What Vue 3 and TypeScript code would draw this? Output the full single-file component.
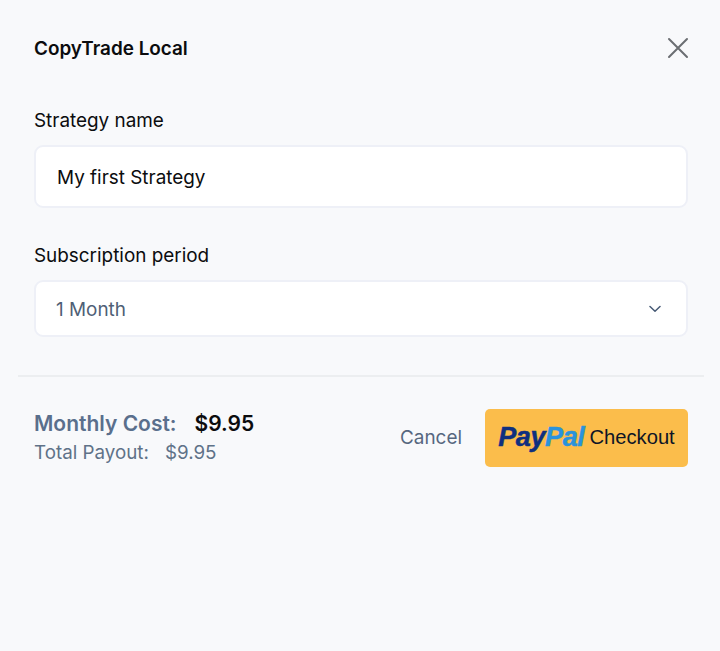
<script setup lang="ts">
const title = 'CopyTrade Local'
</script>

<template>
  <div class="page">
    <header class="head">
      <h1 class="title">{{ title }}</h1>
      <button class="close" type="button" aria-label="Close">
        <svg width="22" height="22" viewBox="0 0 22 22" fill="none">
          <path d="M2 2L20 20M20 2L2 20" stroke="#6b6e72" stroke-width="2" stroke-linecap="round" />
        </svg>
      </button>
    </header>
    <section class="form">
      <div class="field first">
        <label class="label">Strategy name</label>
        <div class="input">My first Strategy</div>
      </div>
      <div class="field second">
        <label class="label">Subscription period</label>
        <div class="select">
          <span>1 Month</span>
          <svg width="12" height="8" viewBox="0 0 12 8" fill="none">
            <path d="M1 1.5L6 6.2L11 1.5" stroke="#475a75" stroke-width="1.5" stroke-linecap="round" stroke-linejoin="round" />
          </svg>
        </div>
      </div>
    </section>
    <footer class="foot">
      <div class="costs">
        <div class="monthly"><span class="m-label">Monthly Cost:</span><span class="m-value">$9.95</span></div>
        <div class="total"><span>Total Payout:</span><span>$9.95</span></div>
      </div>
      <div class="actions">
        <button class="cancel" type="button">Cancel</button>
        <button class="paypal" type="button">
          <span class="logo"><span class="pay">Pay</span><span class="pal">Pal</span></span>
          <span class="checkout">Checkout</span>
        </button>
      </div>
    </footer>
  </div>
</template>

<style>
html, body { margin: 0; background: #f8f9fb; }
</style>

<style scoped>
.page {
  width: 720px;
  height: 651px;
  box-sizing: border-box;
  background: #f8f9fb;
  padding: 0 16px 0 18px;
  font-family: Inter, "Liberation Sans", sans-serif;
  color: #0b0c0e;
}
.head {
  display: flex;
  justify-content: space-between;
  align-items: center;
  height: 96px;
  padding: 1px 15px 0 16px;
  box-sizing: border-box;
}
.title { margin: 0; font-size: 18.9px; font-weight: 600; line-height: 24px; }
.close { border: 0; background: none; padding: 0; display: flex; margin-top: -1px; }
.form { padding: 0 16px; }
.field { display: flex; flex-direction: column; }
.second { margin-top: 35px; }
.label { font-size: 18.9px; line-height: 24px; height: 24px; margin-top: 13px; margin-bottom: 12px; }
.second .label { margin-top: 1px; margin-bottom: 12px; }
.input, .select {
  box-sizing: border-box;
  background: #fff;
  border: 2px solid #eef0f7;
  border-radius: 9px;
  display: flex;
  align-items: center;
}
.input { height: 63px; padding: 2px 21px 0; font-size: 18.9px; }
.select {
  height: 57px;
  padding: 2px 25px 0 20px;
  justify-content: space-between;
  font-size: 18.9px;
  color: #4f5f76;
}
.select svg { margin-top: -2px; }
.foot {
  margin-top: 38px;
  border-top: 2px solid #eceef0;
  display: flex;
  justify-content: space-between;
  align-items: flex-start;
  padding: 32px 16px 0;
}
.monthly { display: flex; gap: 18px; align-items: baseline; font-size: 21px; font-weight: 600; line-height: 28px; margin-top: 1px; }
.m-label { color: #5a6f8c; }
.m-value { color: #0b0c0e; }
.total { display: flex; gap: 16px; font-size: 18.8px; line-height: 24px; color: #5f7288; margin-top: 3px; }
.actions { display: flex; align-items: center; gap: 23px; }
.cancel { border: 0; background: none; padding: 0 0 2px; font: inherit; font-size: 18.9px; color: #56677f; }
.paypal {
  box-sizing: border-box;
  width: 203px;
  height: 58px;
  border: 0;
  border-radius: 5px;
  background: #fbbd4b;
  display: flex;
  align-items: center;
  justify-content: center;
  gap: 5px;
  padding: 0;
}
.logo {
  font-family: "Liberation Sans", sans-serif;
  font-size: 27px;
  font-weight: 700;
  font-style: italic;
  letter-spacing: -0.4px;
  -webkit-text-stroke: 0.5px currentColor;
  margin-top: -2px;
}
.pay { color: #0f2f7f; }
.pal { color: #2a93dc; }
.checkout { font-family: "Liberation Sans", sans-serif; font-size: 20.2px; color: #0e1526; margin-top: -2px; }
</style>
